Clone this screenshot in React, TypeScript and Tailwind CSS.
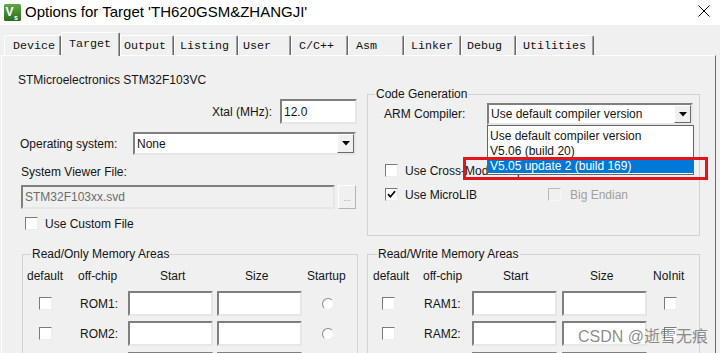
import React from 'react';

const sunken =
  'border-2 border-t-[#7f7f7f] border-l-[#7f7f7f] border-r-[#e6e6e6] border-b-[#e6e6e6]';

function Checkbox({ checked, disabled }: { checked?: boolean; disabled?: boolean }) {
  return (
    <div
      className={`w-[13px] h-[13px] shrink-0 border flex items-center justify-center ${
        disabled
          ? 'bg-[#f0f0f0] border-t-[#b9b9b9] border-l-[#b9b9b9] border-r-[#f7f7f7] border-b-[#f7f7f7]'
          : 'bg-white border-t-[#7a7a7a] border-l-[#7a7a7a] border-r-[#ececec] border-b-[#ececec]'
      }`}
    >
      {checked && (
        <svg width="9" height="9" viewBox="0 0 9 9">
          <path d="M1 4.2 L3.4 6.8 L8 1.2" fill="none" stroke="#000" strokeWidth="1.7" />
        </svg>
      )}
    </div>
  );
}

function Radio() {
  return (
    <div className="w-[12px] h-[12px] rounded-full border bg-white border-t-[#8a8a8a] border-l-[#8a8a8a] border-r-[#ededed] border-b-[#ededed]" />
  );
}

function Arrow() {
  return (
    <div className="w-[17px] h-full shrink-0 flex items-center justify-center bg-[#f0f0f0] border border-t-white border-l-white border-r-[#6a6a6a] border-b-[#6a6a6a]">
      <svg width="8" height="5" viewBox="0 0 8 5">
        <path d="M0 0 H8 L4 4.5 Z" fill="#000" />
      </svg>
    </div>
  );
}

function Logo() {
  return (
    <svg width="17" height="17" viewBox="0 0 17 17" className="ml-[4px] mt-[4px] shrink-0">
      <defs>
        <linearGradient id="lg" x1="0" y1="0" x2="0" y2="1">
          <stop offset="0" stopColor="#62a84a" />
          <stop offset="1" stopColor="#2c6a1d" />
        </linearGradient>
      </defs>
      <rect x="0" y="0" width="17" height="17" rx="1.5" fill="url(#lg)" />
      <text x="1.5" y="12" fill="#fff" fontSize="12" fontWeight="bold" fontFamily="Liberation Sans">
        V
      </text>
      <text x="10" y="15.5" fill="#fff" fontSize="7" fontWeight="bold" fontFamily="Liberation Sans">
        s
      </text>
    </svg>
  );
}

const tabs = [
  { label: 'Device', cls: 'w-[57px] pl-[8px]' },
  { label: 'Target', cls: 'w-[59px] pl-[7px]', sel: true },
  { label: 'Output', cls: 'w-[54px] pl-[3px]' },
  { label: 'Listing', cls: 'w-[64px] pl-[5px]' },
  { label: 'User', cls: 'w-[53px] pl-[4px]' },
  { label: 'C/C++', cls: 'w-[57px] pl-[7px]' },
  { label: 'Asm', cls: 'w-[56px] pl-[7px]' },
  { label: 'Linker', cls: 'w-[57px] pl-[6px]' },
  { label: 'Debug', cls: 'w-[55px] pl-[5px]' },
  { label: 'Utilities', cls: 'w-[78px] pl-[6px]' },
];

function Input({ cls }: { cls: string }) {
  return <div className={`h-[25px] bg-white ${sunken} ${cls}`} />;
}

export default function App() {
  return (
    <div className="relative w-[720px] h-[353px] overflow-hidden bg-[#f0f0f0] flex flex-col font-['Liberation_Sans',Arial,sans-serif] text-[12px] leading-[14px] text-[#151515]">
      {/* title bar */}
      <div className="h-[25px] shrink-0 bg-white flex items-start">
        <Logo />
        <div className="ml-[4px] mt-[3px] text-[15px] leading-[17px] text-black whitespace-nowrap">
          Options for Target 'TH620GSM&amp;ZHANGJI'
        </div>
        <svg className="ml-auto mr-[10px] mt-[5px]" width="12" height="12" viewBox="0 0 12 12">
          <path d="M0.5 0.5 L11.5 11.5 M11.5 0.5 L0.5 11.5" stroke="#000" strokeWidth="1" />
        </svg>
      </div>

      {/* tabs */}
      <div className="h-[30px] shrink-0 flex items-end pl-[4px] relative z-10 font-['Liberation_Mono',monospace] text-[11.7px] leading-[14px] text-[#111]">
        {tabs.map((t) =>
          t.sel ? (
            <div
              key={t.label}
              className={`${t.cls} h-[24px] -mb-px pt-[4px] bg-[#f0f0f0] border-t border-l border-r border-t-white border-l-white border-r-[#6a6a6a] shadow-[inset_-1px_0_0_#a0a0a0] rounded-tl-[2px] rounded-tr-[2px] whitespace-nowrap`}
            >
              {t.label}
            </div>
          ) : (
            <div
              key={t.label}
              className={`${t.cls} h-[20px] pt-[3px] border-t border-l border-r border-t-white border-l-white border-r-[#6a6a6a] shadow-[inset_-1px_0_0_#a0a0a0] rounded-tl-[2px] rounded-tr-[2px] whitespace-nowrap`}
            >
              {t.label}
            </div>
          )
        )}
      </div>

      {/* panel */}
      <div className="flex-1 min-h-0 ml-[1px] mr-[4px] border-t border-l border-r border-t-white border-l-white border-r-[#6a6a6a] flex items-start pl-[16px]">
        {/* left column */}
        <div className="w-[340px] shrink-0">
          <div className="pt-[17px] whitespace-nowrap">STMicroelectronics STM32F103VC</div>

          <div className="mt-[12px] h-[25px] flex items-center justify-end pr-[1px]">
            <span className="mr-[8px]">Xtal (MHz):</span>
            <div className={`w-[77px] h-[25px] bg-white ${sunken} pl-[2px] flex items-center`}>12.0</div>
          </div>

          <div className="mt-[8px] h-[23px] flex items-center">
            <span className="w-[115px] pl-[2px] shrink-0">Operating system:</span>
            <div className={`w-[223px] h-[23px] bg-white ${sunken} pl-[2px] flex items-center`}>
              <span className="flex-1">None</span>
              <Arrow />
            </div>
          </div>

          <div className="mt-[10px] pl-[3px]">System Viewer File:</div>

          <div className="mt-[6px] h-[24px] flex pl-[3px]">
            <div className={`w-[314px] h-[24px] bg-[#f0f0f0] ${sunken} pl-[2px] flex items-center text-[#6d6d6d]`}>
              STM32F103xx.svd
            </div>
            <div className="ml-[3px] w-[18px] h-[24px] flex items-end justify-center pb-[5px] border border-t-white border-l-white border-r-[#b4b4b4] border-b-[#b4b4b4] text-[#a0a0a0] text-[9px] leading-[9px]">
              ...
            </div>
          </div>

          <div className="mt-[8px] h-[13px] flex items-center pl-[7px]">
            <Checkbox />
            <span className="ml-[7px]">Use Custom File</span>
          </div>

          <fieldset className="mt-[17px] ml-[4px] w-[336px] h-[130px] border border-[#d2d2d2]">
            <legend className="ml-[8px] px-[1px] leading-[14px]">Read/Only Memory Areas</legend>
            <div className="mt-[8px] h-[14px] flex">
              <div className="w-[42px] pl-[4px]">default</div>
              <div className="w-[63px] pl-[13px]">off-chip</div>
              <div className="w-[89px] pl-[32px]">Start</div>
              <div className="w-[89px] pl-[28px]">Size</div>
              <div className="pl-[1px]">Startup</div>
            </div>
            {['ROM1:', 'ROM2:'].map((r, i) => (
              <div key={r} className={`h-[25px] flex items-center ${i === 0 ? 'mt-[8px]' : 'mt-[5px]'}`}>
                <div className="w-[42px] pl-[16px]">
                  <Checkbox />
                </div>
                <div className="w-[63px] pl-[15px]">{r}</div>
                <div className="w-[89px]">
                  <Input cls="w-[85px]" />
                </div>
                <div className="w-[89px]">
                  <Input cls="w-[85px]" />
                </div>
                <div className="pl-[16px]">
                  <Radio />
                </div>
              </div>
            ))}
            <div className="mt-[6px] h-[25px] flex items-start pl-[105px]">
              <Input cls="w-[85px]" />
              <Input cls="w-[85px] ml-[4px]" />
            </div>
          </fieldset>
        </div>

        {/* right column */}
        <div className="w-[333px] ml-[9px] shrink-0 pt-[31px]">
          <fieldset className="w-[333px] h-[149px] border border-[#d2d2d2]">
            <legend className="ml-[7px] px-[1px] leading-[14px]">Code Generation</legend>
            <div className="mt-[2px] h-[22px] flex items-center">
              <span className="w-[119px] pl-[16px] shrink-0">ARM Compiler:</span>
              <div className="relative w-[206px] h-[22px]">
                <div className={`w-[206px] h-[22px] bg-white ${sunken} pl-[2px] flex items-center`}>
                  <span className="flex-1 whitespace-nowrap">Use default compiler version</span>
                  <Arrow />
                </div>
                <div className="absolute left-0 top-full z-10 w-[207px] h-[50px] bg-white border border-[#646464] pt-[2px]">
                  <div className="h-[15px] pt-[1px] pl-[2px] whitespace-nowrap">Use default compiler version</div>
                  <div className="h-[15px] pt-[1px] pl-[2px] whitespace-nowrap">V5.06 (build 20)</div>
                  <div className="h-[15px] pt-[1px] pl-[2px] whitespace-nowrap bg-[#0078d7] text-white">
                    V5.05 update 2 (build 169)
                  </div>
                </div>
                <div className="absolute left-[-24px] top-[54px] z-20 w-[245px] h-[23px] border-[3px] border-[#e3141c]" />
              </div>
            </div>

            <div className="mt-[39px] h-[13px] flex items-center pl-[17px]">
              <Checkbox />
              <span className="ml-[7px] whitespace-nowrap">Use Cross-Module Optimization</span>
            </div>

            <div className="mt-[11px] h-[13px] flex items-center pl-[17px]">
              <div className="w-[163px] flex items-center">
                <Checkbox checked />
                <span className="ml-[7px]">Use MicroLIB</span>
              </div>
              <Checkbox disabled />
              <span className="ml-[9px] text-[#a0a0a0]">Big Endian</span>
            </div>
          </fieldset>

          <fieldset className="mt-[11px] w-[333px] h-[130px] border border-[#d2d2d2]">
            <legend className="ml-[9px] px-[1px] leading-[14px]">Read/Write Memory Areas</legend>
            <div className="mt-[8px] h-[14px] flex">
              <div className="w-[44px] pl-[5px]">default</div>
              <div className="w-[60px] pl-[11px]">off-chip</div>
              <div className="w-[90px] pl-[31px]">Start</div>
              <div className="w-[90px] pl-[28px]">Size</div>
              <div className="pl-[1px]">NoInit</div>
            </div>
            {['RAM1:', 'RAM2:'].map((r, i) => (
              <div key={r} className={`h-[25px] flex items-center ${i === 0 ? 'mt-[8px]' : 'mt-[5px]'}`}>
                <div className="w-[44px] pl-[14px]">
                  <Checkbox />
                </div>
                <div className="w-[60px] pl-[12px]">{r}</div>
                <div className="w-[90px]">
                  <Input cls="w-[85px]" />
                </div>
                <div className="w-[90px]">
                  <Input cls="w-[85px]" />
                </div>
                <div className="pl-[12px]">
                  <Checkbox />
                </div>
              </div>
            ))}
            <div className="mt-[6px] h-[25px] flex items-start pl-[104px]">
              <Input cls="w-[85px]" />
              <Input cls="w-[85px] ml-[5px]" />
            </div>
          </fieldset>
        </div>
      </div>

      {/* watermark */}
      <div className="absolute left-[578px] top-[327px] z-30 text-[16px] leading-[20px] text-[#6f6f6f]/80 whitespace-nowrap font-['Liberation_Sans','Noto_Sans_CJK_SC',sans-serif]">
        CSDN @逝雪无痕
      </div>
    </div>
  );
}
